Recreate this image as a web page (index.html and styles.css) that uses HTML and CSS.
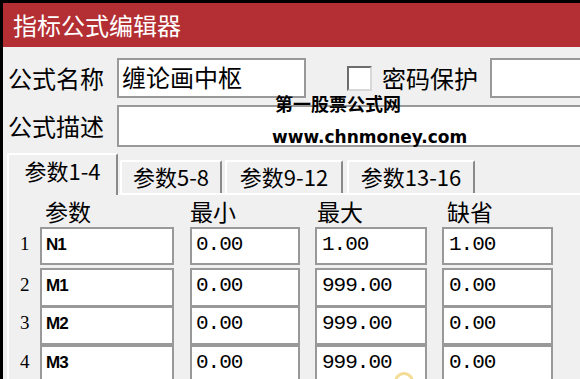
FILE: index.html
```html
<!DOCTYPE html>
<html lang="zh-CN">
<head>
<meta charset="utf-8">
<title>指标公式编辑器</title>
<link rel="stylesheet" href="styles.css">
</head>
<body>
<div class="window">
  <div class="titlebar">指标公式编辑器</div>
  <div class="content">
    <div class="row row-name">
      <span class="label">公式名称</span>
      <div class="field field-name">缠论画中枢</div>
      <span class="check"></span>
      <span class="label-pw">密码保护</span>
      <div class="field field-pw"></div>
    </div>
    <div class="row row-desc">
      <span class="label">公式描述</span>
      <div class="field field-desc"></div>
    </div>
    <div class="tabs">
      <div class="tab tab1 active">参数1-4</div>
      <div class="tab tab2">参数5-8</div>
      <div class="tab tab3">参数9-12</div>
      <div class="tab tab4">参数13-16</div>
    </div>
    <div class="panel">
      <div class="prow head">
        <span></span>
        <span class="h h1">参数</span>
        <span class="h h2">最小</span>
        <span class="h h3">最大</span>
        <span class="h h4">缺省</span>
      </div>
      <div class="prow r1">
        <span class="num">1</span>
        <div class="cell name">N1</div>
        <div class="cell c2">0.00</div>
        <div class="cell c3">1.00</div>
        <div class="cell c4">1.00</div>
      </div>
      <div class="prow r2">
        <span class="num">2</span>
        <div class="cell name">M1</div>
        <div class="cell c2">0.00</div>
        <div class="cell c3">999.00</div>
        <div class="cell c4">0.00</div>
      </div>
      <div class="prow r3">
        <span class="num">3</span>
        <div class="cell name">M2</div>
        <div class="cell c2">0.00</div>
        <div class="cell c3">999.00</div>
        <div class="cell c4">0.00</div>
      </div>
      <div class="prow r4">
        <span class="num">4</span>
        <div class="cell name">M3</div>
        <div class="cell c2">0.00</div>
        <div class="cell c3">999.00</div>
        <div class="cell c4">0.00</div>
      </div>
    </div>
  </div>
  <div class="watermark">
    <div class="wm1">第一股票公式网</div>
    <div class="wm2">www.chnmoney.com</div>
  </div>
  <span class="logo-dot"></span>
</div>
</body>
</html>
```

FILE: styles.css
```css
html, body {
  margin: 0;
  padding: 0;
}
body {
  background: #000;
  padding: 3px 0 0 3px;
  height: 379px;
  box-sizing: border-box;
  overflow: hidden;
  font-family: "Noto Sans CJK SC", "Liberation Sans", sans-serif;
  color: #000;
}
.window {
  position: relative;
  background: #f0f0f0;
  height: 376px;
  overflow: hidden;
}
.titlebar {
  height: 44px;
  line-height: 44px;
  background: #b32f33;
  color: #fff;
  font-size: 24px;
  padding-left: 10px;
}
.content {
  padding-top: 11px;
}
.row {
  display: flex;
  align-items: center;
}
.label {
  flex: 0 0 109px;
  margin-left: 5px;
  font-size: 24px;
  line-height: 30px;
}
.field {
  box-sizing: border-box;
  flex-shrink: 0;
  background: #fff;
  border: 2px solid #999;
}
.row-name {
  height: 40px;
}
.field-name {
  width: 189px;
  height: 40px;
  font-size: 24px;
  line-height: 34px;
  padding-left: 3px;
}
.check {
  flex-shrink: 0;
  box-sizing: border-box;
  width: 25px;
  height: 25px;
  margin-left: 41px;
  background: #fff;
  border: 2px solid;
  border-color: #6d6d6d #d8d8d8 #d8d8d8 #6d6d6d;
}
.label-pw {
  margin-left: 10px;
  font-size: 24px;
  line-height: 30px;
  flex-shrink: 0;
}
.field-pw {
  width: 100px;
  height: 40px;
  margin-left: 12px;
}
.row-desc {
  margin-top: 7px;
  height: 42px;
}
.field-desc {
  width: 470px;
  height: 42px;
}
.tabs {
  display: flex;
  align-items: flex-start;
  height: 40px;
  margin-top: 6px;
  padding-left: 4px;
  position: relative;
  z-index: 1;
}
.tab {
  box-sizing: border-box;
  height: 33px;
  margin-top: 7px;
  border-top: 2px solid #fff;
  border-left: 2px solid #fff;
  border-right: 2px solid #8a8a8a;
  background: #f0f0f0;
  text-align: center;
  font-size: 22px;
  line-height: 29px;
  border-radius: 2px 2px 0 0;
}
.tab.active {
  height: 42px;
  margin-top: 0;
  line-height: 30px;
}
.tab1 { width: 111px; }
.tab2 { width: 102px; margin-left: 2px; }
.tab3 { width: 118px; margin-left: 3px; }
.tab4 { width: 128px; margin-left: 4px; }
.panel {
  margin-left: 4px;
  border-top: 2px solid #fff;
  border-left: 2px solid #fff;
}
.prow {
  display: grid;
  grid-template-columns: 31px 150px 125px 127px 111px;
}
.head {
  height: 32px;
  align-items: center;
}
.h {
  font-size: 23px;
  line-height: 28px;
}
.h1 { padding-left: 5px; }
.h2 { padding-left: 0; }
.h3 { padding-left: 2px; }
.h4 { padding-left: 5px; }
.r1 { height: 38px; }
.r2 { height: 39px; margin-top: 3px; }
.r3 { height: 39px; margin-top: -1px; }
.r4 { height: 40px; }
.num {
  font-family: "Liberation Serif", serif;
  font-size: 19px;
  padding-left: 11px;
  padding-top: 7px;
  line-height: 20px;
}
.cell {
  box-sizing: border-box;
  height: 100%;
  background: #fff;
  border: 2px solid #999;
  font-family: "Liberation Mono", monospace;
  font-size: 21px;
  letter-spacing: -1px;
  line-height: 32px;
  padding-left: 4px;
}
.cell.name {
  width: 134px;
  font-family: "Liberation Sans", sans-serif;
  font-weight: bold;
  font-size: 17px;
  letter-spacing: -1px;
}
.c2 { width: 110px; }
.c3 { width: 112px; padding-left: 5px; }
.c4 { width: 111px; padding-left: 5px; }
.watermark {
  position: absolute;
  left: 269px;
  top: 88px;
  font-weight: bold;
  color: #000;
}
.wm1 {
  font-size: 18px;
  line-height: 24px;
  padding-left: 3px;
}
.wm2 {
  margin-top: 11px;
  font-family: "DejaVu Sans", sans-serif;
  font-size: 17px;
  line-height: 22px;
}
.logo-dot {
  position: absolute;
  left: 391px;
  top: 369px;
  width: 14px;
  height: 14px;
  border-radius: 50%;
  border: 3px solid #f5dc95;
}
```
